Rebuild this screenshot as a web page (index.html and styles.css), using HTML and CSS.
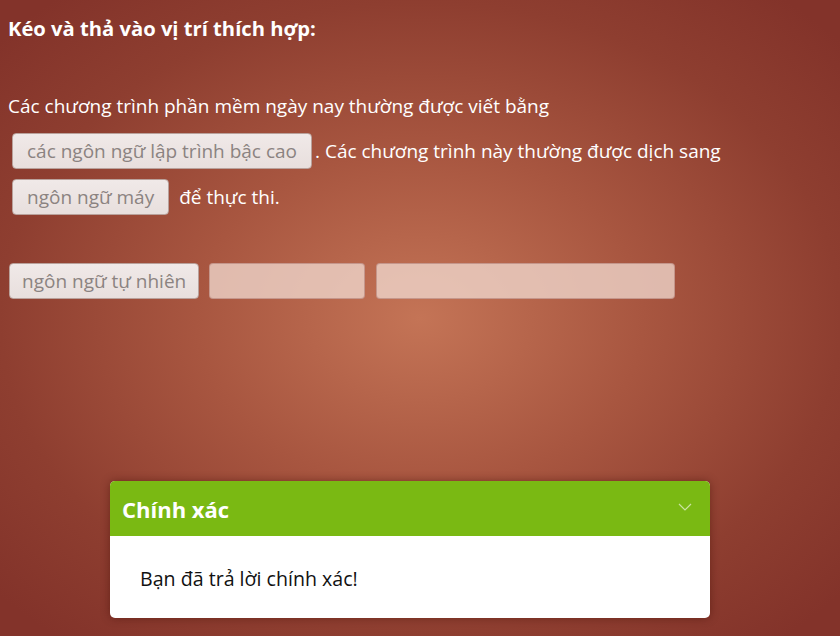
FILE: index.html
```html
<!DOCTYPE html>
<html lang="vi">
<head>
<meta charset="utf-8">
<link rel="stylesheet" href="styles.css">
</head>
<body>
<div class="page">
  <h1 class="title">Kéo và thả vào vị trí thích hợp:</h1>
  <div class="question">
    <p class="line">Các chương trình phần mềm ngày nay thường được viết bằng</p>
    <p class="line"><span class="zone filled">các ngôn ngữ lập trình bậc cao</span><span class="after">. Các chương trình này thường được dịch sang</span></p>
    <p class="line"><span class="zone filled">ngôn ngữ máy</span><span class="after wide">để thực thi.</span></p>
  </div>
  <div class="pool">
    <span class="item">ngôn ngữ tự nhiên</span>
    <span class="slot s1"></span>
    <span class="slot s2"></span>
  </div>
  <div class="spacer"></div>
  <div class="card">
    <div class="card-head">
      <span class="card-title">Chính xác</span>
      <svg class="chev" width="14" height="8" viewBox="0 0 14 8"><path d="M1 1 L7 7 L13 1" fill="none" stroke="currentColor" stroke-width="1.2"/></svg>
    </div>
    <div class="card-body">Bạn đã trả lời chính xác!</div>
  </div>
</div>
</body>
</html>
```

FILE: styles.css
```css
html, body {
  margin: 0;
  padding: 0;
  height: 100%;
}
body {
  background: radial-gradient(ellipse 560px 420px at 420px 318px, #c47456 0%, #a85640 40%, #8e3e30 75%, #83332a 100%);
  background-color: #83332a;
  font-family: "Open Sans", sans-serif;
  color: #ffffff;
  overflow: hidden;
}
.page {
  height: 636px;
  display: flex;
  flex-direction: column;
  padding: 0 8px;
  box-sizing: border-box;
}
.title {
  margin: 14px 0 0 0;
  font-size: 20.2px;
  line-height: 28px;
  font-weight: 700;
}
.question {
  margin-top: 51px;
}
.line {
  margin: 0;
  font-size: 19px;
  line-height: 26px;
  display: flex;
  align-items: center;
}
.line + .line {
  margin-top: 14px;
}
.line + .line + .line {
  margin-top: 10px;
}
.zone {
  display: inline-block;
  height: 36px;
  line-height: 34px;
  box-sizing: border-box;
  padding: 0 14px;
  border-radius: 4px;
  border: 1px solid #b9a19b;
  background: linear-gradient(#f0e9e8, #e8dfdd);
  color: #8b8381;
  margin-left: 4px;
}
.after {
  margin-left: 3px;
}
.after.wide {
  margin-left: 10px;
}
.pool {
  margin-top: 48px;
  display: flex;
  gap: 10px;
  height: 36px;
}
.item {
  display: inline-block;
  height: 36px;
  line-height: 34px;
  box-sizing: border-box;
  padding: 0 12px;
  border-radius: 4px;
  border: 1px solid #b9a19b;
  background: linear-gradient(#f0e9e8, #e8dfdd);
  color: #8b8381;
  font-size: 19px;
  margin-left: 1px;
}
.slot {
  display: inline-block;
  height: 36px;
  box-sizing: border-box;
  border-radius: 4px;
  border: 1px solid rgba(190, 140, 130, 0.8);
  background: rgba(240, 215, 205, 0.78);
}
.s1 { width: 156px; }
.s2 { width: 299px; margin-left: 1px; }
.spacer {
  flex: 1;
}
.card {
  align-self: flex-start;
  margin-left: 102px;
  margin-bottom: 18px;
  width: 600px;
  border-radius: 5px;
  overflow: hidden;
  background: #ffffff;
  box-shadow: 0 0 10px rgba(60, 10, 5, 0.45);
}
.card-head {
  height: 55px;
  background: #7ab913;
  display: flex;
  align-items: center;
  justify-content: space-between;
  padding: 0 18px 0 12px;
}
.card-title {
  font-family: "Open Sans", sans-serif;
  font-weight: 700;
  font-size: 22px;
  color: #ffffff;
}
.chev {
  color: rgba(255, 255, 255, 0.6);
  margin-top: -4px;
}
.card-body {
  height: 82px;
  display: flex;
  align-items: center;
  padding: 0 30px;
  font-family: "Open Sans", sans-serif;
  font-size: 19.6px;
  color: #111111;
  padding-top: 2px;
  box-sizing: border-box;
}
```
